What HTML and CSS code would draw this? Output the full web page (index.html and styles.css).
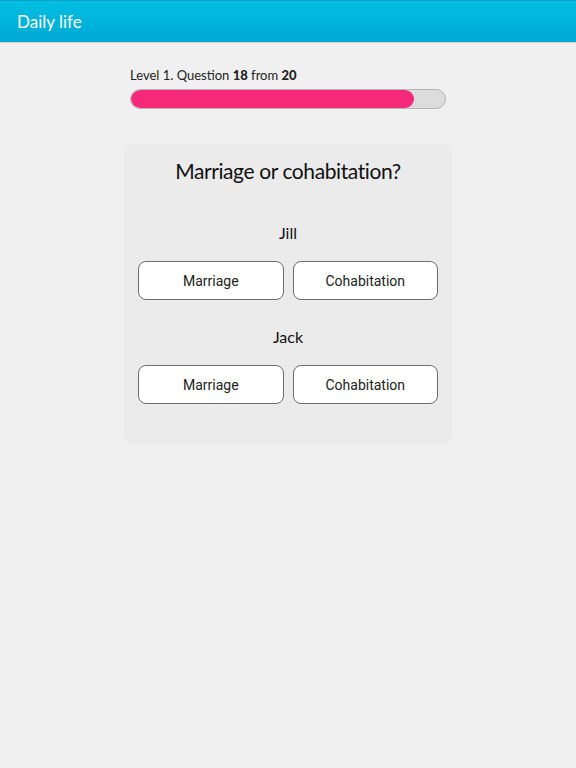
FILE: index.html
```html
<!DOCTYPE html>
<html lang="en">
<head>
    <meta charset="UTF-8">
    <meta name="viewport" content="width=device-width, initial-scale=1.0">
    <title>Daily life</title>
    <link rel="stylesheet" href="styles.css">
</head>
<body>
    <!-- Top bar -->
    <header class="topbar">
        <span class="topbar-title">Daily life</span>
    </header>

    <main class="quiz">
        <!-- Progress -->
        <div class="progress">
            <div class="progress-label">Level 1. Question <b>18</b> from <b>20</b></div>
            <div class="progress-track">
                <div class="progress-fill" style="width: 90%"></div>
            </div>
        </div>

        <!-- Question card -->
        <section class="card">
            <h1 class="question">Marriage or cohabitation?</h1>

            <div class="person">
                <div class="person-name">Jill</div>
                <div class="choices">
                    <button class="choice">Marriage</button>
                    <button class="choice">Cohabitation</button>
                </div>
            </div>

            <div class="person">
                <div class="person-name">Jack</div>
                <div class="choices">
                    <button class="choice">Marriage</button>
                    <button class="choice">Cohabitation</button>
                </div>
            </div>
        </section>
    </main>
</body>
</html>
```

FILE: styles.css
```css
/* Page */
body {
    margin: 0;
    background-color: #f0f0f0;
    font-family: Lato, "Open Sans", sans-serif;
    color: #111;
    height: 100vh;
}

/* Top bar */
.topbar {
    height: 41px;
    border-top: 1px solid #0b9ec6;
    background: linear-gradient(#00bee3, #00a9d2);
    box-shadow: 0 1px 1px rgba(0, 0, 0, 0.12);
    display: flex;
    align-items: center;
    padding-left: 17px;
}

.topbar-title {
    color: white;
    font-size: 17px;
    margin-top: -1px;
}

/* Main column */
.quiz {
    width: 328px;
    margin: 0 auto;
    padding-top: 25px;
}

/* Progress */
.progress {
    padding: 0 6px;
}

.progress-label {
    font-size: 13px;
    color: #222;
    line-height: 16px;
}

.progress-label b {
    font-weight: 900;
}

.progress-track {
    margin-top: 6px;
    height: 18px;
    border: 1px solid #b5b5b5;
    border-radius: 10px;
    background-color: #dcdcdc;
    overflow: hidden;
}

.progress-fill {
    height: 100%;
    background-color: #f5287a;
    border-radius: 10px;
}

/* Question card */
.card {
    margin-top: 35px;
    background-color: #ebebeb;
    border-radius: 8px;
    padding: 14px 14px 40px;
}

.question {
    margin: 0;
    text-align: center;
    font-weight: 400;
    font-size: 21px;
    line-height: 26px;
    letter-spacing: -0.4px;
}

.person {
    margin-top: 39px;
}

.person + .person {
    margin-top: 27px;
}

.person-name {
    text-align: center;
    font-size: 16px;
    line-height: 20px;
}

.choices {
    margin-top: 18px;
    display: grid;
    grid-template-columns: 1fr 1fr;
    gap: 9px;
}

.choice {
    height: 39px;
    border: 1px solid #6d6d6d;
    border-radius: 8px;
    background-color: white;
    font-family: Roboto, sans-serif;
    font-size: 14px;
    color: #222;
    cursor: pointer;
}
```
